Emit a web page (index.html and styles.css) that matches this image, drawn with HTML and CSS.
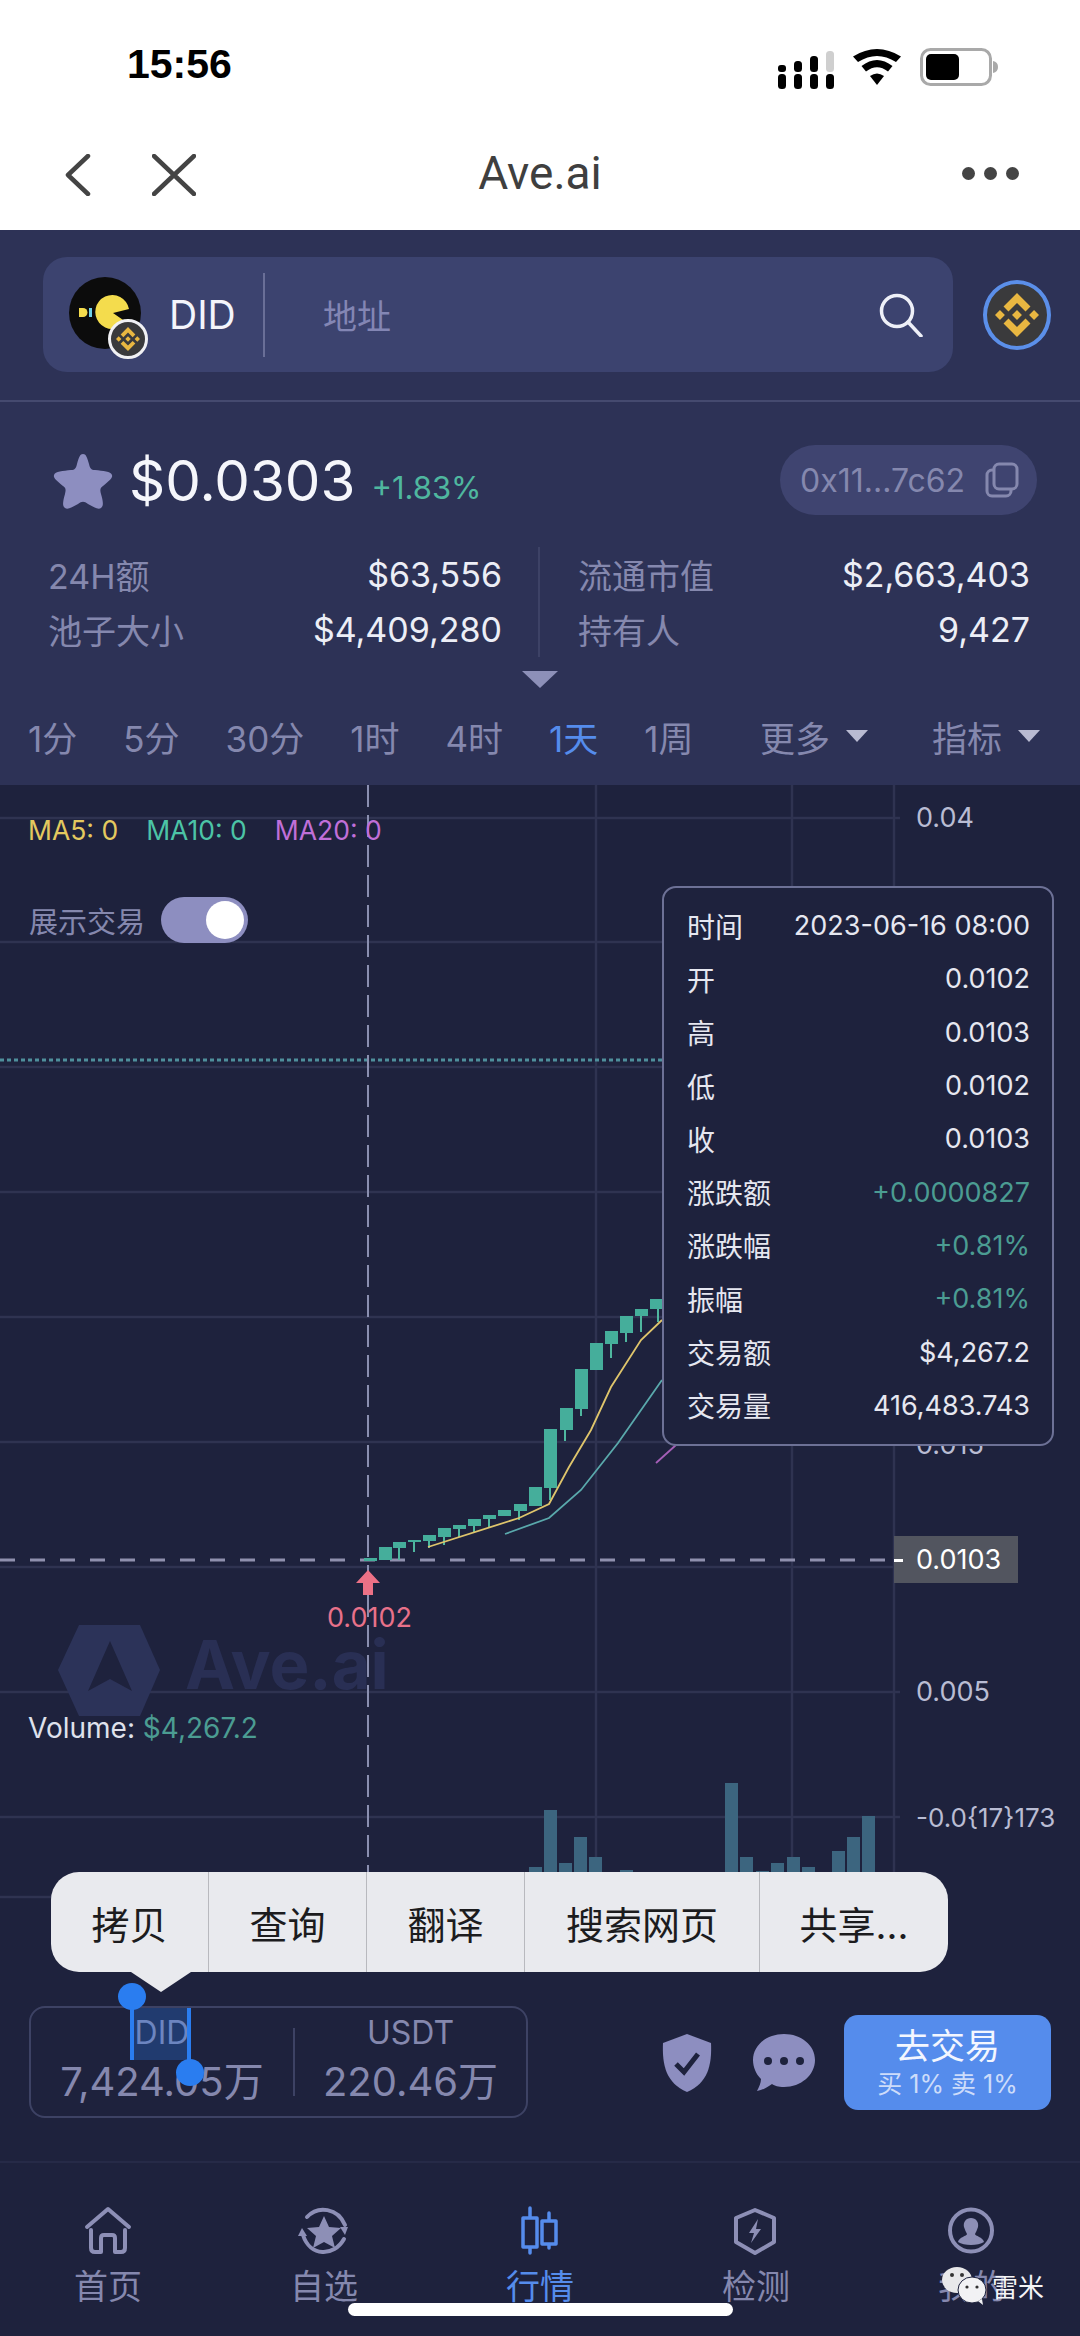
FILE: index.html
```html
<!DOCTYPE html><html lang="zh-CN">
<head>
  <meta charset="UTF-8" />
  <meta name="viewport" content="width=device-width, initial-scale=1.0" />
  <title>Ave.ai</title>
  <link rel="stylesheet" href="styles.css">
</head>
<body>
  <svg class="defs" width="0" height="0">
    <symbol id="bnb" viewBox="0 0 32 32"><path d="M9.8 13.5 16 7.3l6.2 6.2 3.6-3.6L16 0 6.2 9.9zM0 16l3.6-3.6L7.2 16l-3.6 3.6zM9.8 18.5 16 24.7l6.2-6.2 3.6 3.6L16 32l-9.8-9.8zM24.8 16l3.6-3.6L32 16l-3.6 3.6zM19.6 16 16 12.4 13.3 15l-.3.3-.6.7L16 19.6 19.6 16z"/></symbol>
  </svg>

  <div class="page">
    <div class="status">
      <span class="clock">15:56</span>
      <div class="status-icons">
        <svg class="signal" width="56" height="38" viewBox="0 0 56 38">
          <rect x="0" y="23" width="8" height="15" rx="3.5"/><rect x="0" y="14" width="8" height="7" rx="3"/>
          <rect x="16" y="23" width="8" height="15" rx="3.5"/><rect x="16" y="10" width="8" height="11" rx="3.5"/>
          <rect x="32" y="23" width="8" height="15" rx="3.5"/><rect x="32" y="5" width="8" height="16" rx="3.5"/>
          <rect x="48" y="23" width="8" height="15" rx="3.5"/><rect x="48" y="0" width="8" height="21" rx="3.5" fill="#cfcfcf"/>
        </svg>
        <svg width="48" height="36" viewBox="0 0 48 36">
          <path d="M24 36 17 27q7-5 14 0z"/>
          <path d="M13 22.500 8.500 17q15.500-12 31 0L35 22.500q-11-8.500-22 0z"/>
          <path d="M5 13 0 7.500q24-15 48 0L43 13Q24 1 5 13z"/>
        </svg>
        <svg width="78" height="38" viewBox="0 0 78 38">
          <rect x="1.500" y="1.500" width="69" height="35" rx="9" fill="#fff" stroke="#a9a9a9" stroke-width="3"/>
          <rect x="6" y="6" width="33" height="26" rx="5"/>
          <path d="M73 13q5 1 5 6t-5 6z" fill="#a9a9a9"/>
        </svg>
      </div>
    </div>

    <div class="navbar">
      <svg class="nav-back" width="26" height="42" viewBox="0 0 26 42"><path d="M23 2 3 21l20 19"/></svg>
      <svg class="nav-close" width="44" height="42" viewBox="0 0 44 42"><path d="M2 2l40 38M42 2 2 40"/></svg>
      <span class="nav-title">Ave.ai</span>
      <div class="nav-dots"><i></i><i></i><i></i></div>
    </div>

    <div class="search-section">
      <div class="search-box">
        <div class="token">
          <svg class="token-logo" width="72" height="72" viewBox="0 0 72 72">
            <circle cx="36" cy="36" r="36" fill="#0c0c0c"/>
            <path d="M60 33a17 17 0 1 0 -3 13L44 37z" fill="#f4dc4d" transform="translate(0 -1)"/>
            <path d="M10 31h4a4 4 0 0 1 0 9h-4z" fill="#f4dc4d"/>
            <rect x="20" y="31" width="3" height="9" fill="#6fd0e8"/>
            <path d="M27 31h4a4 4 0 0 1 0 9h-4z" fill="#f4dc4d"/>
          </svg>
          <span class="chain-badge"><svg width="24" height="24"><use href="#bnb"/></svg></span>
        </div>
        <span class="token-name">DID</span>
        <span class="search-sep"></span>
        <span class="search-hint">地址</span>
        <svg class="search-icon" width="44" height="44" viewBox="0 0 44 44"><circle cx="18" cy="18" r="15.500"/><path d="M29 29l13 14"/></svg>
      </div>
      <div class="chain-btn"><svg width="44" height="44"><use href="#bnb"/></svg></div>
    </div>

    <div class="info">
      <div class="price-row">
        <svg class="fav" width="62" height="60" viewBox="0 0 62 60"><path d="M31 3c3 0 4 3 6 10 1 4 2 6 6 6 8 1 16 1 17 5 1 3-3 6-9 11-3 2-3 4-2 8 2 7 3 12 0 14-3 2-7-1-13-4-4-3-6-3-10 0-6 3-10 6-13 4-3-2-2-7 0-14 1-4 1-6-2-8-6-5-10-8-9-11 1-4 9-4 17-5 4 0 5-2 6-6 2-7 3-10 6-10z"/></svg>
        <span class="price">$0.0303</span>
        <span class="change">+1.83%</span>
        <div class="addr">
          <span>0x11...7c62</span>
          <svg width="34" height="36" viewBox="0 0 34 36"><rect x="9" y="2" width="23" height="25" rx="5"/><path d="M9 8H7a5 5 0 0 0-5 5v16a5 5 0 0 0 5 5h14a5 5 0 0 0 5-5v-2"/></svg>
        </div>
      </div>
      <div class="stats">
        <div class="stats-col left">
          <div class="stat"><span>24H额</span><b>$63,556</b></div>
          <div class="stat"><span>池子大小</span><b>$4,409,280</b></div>
        </div>
        <div class="stats-col right">
          <div class="stat"><span>流通市值</span><b>$2,663,403</b></div>
          <div class="stat"><span>持有人</span><b>9,427</b></div>
        </div>
      </div>
      <div class="collapse"></div>
      <div class="tabs">
        <span>1分</span><span>5分</span><span>30分</span><span>1时</span><span>4时</span><span class="on">1天</span><span>1周</span>
        <span class="more first">更多<i></i></span>
        <span class="more">指标<i></i></span>
      </div>
    </div>

    <div class="chart">
      <svg class="chart-svg" width="1080" height="1215" viewBox="0 785 1080 1215">
        <g class="grid">
          <path d="M0 818H900M0 942H900M0 1067H900M0 1192H900M0 1317H900M0 1442H900M0 1567H900M0 1692H900M0 1817H900M0 1897H900"/>
          <path d="M596 785V1900M792 785V1900M894 785V1900"/>
        </g>
        <g class="volume">
          <rect x="529" y="1867" width="13" height="40"/><rect x="544" y="1810" width="13" height="90"/><rect x="559" y="1863" width="13" height="40"/>
          <rect x="574" y="1837" width="13" height="60"/><rect x="589" y="1857" width="13" height="40"/><rect x="620" y="1870" width="13" height="30"/>
          <rect x="725" y="1783" width="13" height="120"/><rect x="740" y="1857" width="13" height="40"/><rect x="756" y="1871" width="13" height="30"/>
          <rect x="771" y="1863" width="13" height="40"/><rect x="787" y="1857" width="13" height="40"/><rect x="802" y="1867" width="13" height="30"/>
          <rect x="832" y="1851" width="13" height="50"/><rect x="847" y="1837" width="13" height="60"/><rect x="862" y="1816" width="13" height="90"/>
        </g>
        <path class="dots" d="M0 1060H663"/>
        <path class="cross-v" d="M368 785V1872"/>
        <path class="cross-h" d="M0 1560H894"/>
        <g class="wicks">
          <path d="M399 1542V1560M414 1540V1552M429 1535V1548M444 1528V1545M459 1525V1537M474 1519V1532M489 1515V1528M519 1504V1520M550 1429V1500M565 1408V1441M581 1369V1416M611 1331V1358M626 1316V1342M641 1309V1332M658 1300V1322"/>
        </g>
        <g class="candles">
          <rect x="364" y="1558" width="13" height="3" fill="#8f90ae"/>
          <rect x="379" y="1547" width="13" height="13"/><rect x="393" y="1542" width="13" height="6"/><rect x="408" y="1540" width="13" height="2"/>
          <rect x="423" y="1535" width="13" height="6"/><rect x="438" y="1528" width="13" height="9"/><rect x="453" y="1525" width="13" height="4"/>
          <rect x="468" y="1519" width="13" height="7"/><rect x="483" y="1515" width="13" height="4"/><rect x="498" y="1510" width="13" height="6"/>
          <rect x="514" y="1504" width="13" height="7"/><rect x="529" y="1487" width="13" height="19"/><rect x="544" y="1429" width="13" height="59"/>
          <rect x="560" y="1408" width="13" height="22"/><rect x="575" y="1369" width="13" height="40"/><rect x="590" y="1343" width="13" height="27"/>
          <rect x="605" y="1331" width="13" height="13"/><rect x="620" y="1316" width="13" height="17"/><rect x="635" y="1309" width="13" height="7"/>
          <rect x="650" y="1299" width="13" height="10"/>
        </g>
        <path class="line-yellow" d="M428 1547 519 1518 549 1504 569 1467 591 1430 611 1387 641 1340 662 1320"/>
        <path class="line-teal" d="M505 1534 549 1518 581 1490 618 1443 662 1380"/>
        <path class="line-purple" d="M656 1463 676 1445"/>
        <path class="arrow-up" d="M368 1570l12 13h-7v12h-10v-12h-7z"/>
        <g class="logo-mark">
          <path d="M79 1625h61l20 45-20 46h-61l-21-46z"/>
          <path class="logo-cut" d="M110 1641l22 50-22-12-22 12z"/>
        </g>
      </svg>

      <span class="watermark">Ave.ai</span>
      <div class="ma"><span class="y">MA5: 0</span><span class="g">MA10: 0</span><span class="p">MA20: 0</span></div>
      <div class="show-trades"><span>展示交易</span><i class="toggle"></i></div>
      <span class="axis a1">0.04</span>
      <span class="axis a2">0.015</span>
      <span class="axis a3">0.005</span>
      <span class="axis a4">-0.0{17}173</span>
      <span class="axis-now">0.0103</span>
      <span class="low">0.0102</span>
      <div class="volume-label">Volume: <em>$4,267.2</em></div>

      <div class="tooltip">
        <div><span>时间</span><b>2023-06-16 08:00</b></div>
        <div><span>开</span><b>0.0102</b></div>
        <div><span>高</span><b>0.0103</b></div>
        <div><span>低</span><b>0.0102</b></div>
        <div><span>收</span><b>0.0103</b></div>
        <div><span>涨跌额</span><b class="up">+0.0000827</b></div>
        <div><span>涨跌幅</span><b class="up">+0.81%</b></div>
        <div><span>振幅</span><b class="up">+0.81%</b></div>
        <div><span>交易额</span><b>$4,267.2</b></div>
        <div><span>交易量</span><b>416,483.743</b></div>
      </div>
    </div>

    <div class="trade-bar">
      <div class="pool">
        <div class="pool-col"><span>DID</span><b>7,424.05万</b></div>
        <div class="pool-col"><span>USDT</span><b>220.46万</b></div>
      </div>
      <svg class="shield" width="50" height="58" viewBox="0 0 50 58">
        <path d="M25 0 49 9c1 22-3 40-24 49C4 49 0 31 1 9z"/>
        <path class="tick" d="M14 30l8 8 14-18"/>
      </svg>
      <svg class="chat" width="62" height="58" viewBox="0 0 62 58">
        <path d="M31 0c17 0 31 11 31 26S48 53 31 53c-6 0-9-1-12-3-4 3-9 6-15 7 2-4 4-8 4-12C3 40 0 33 0 26 0 11 14 0 31 0z"/>
        <circle cx="15" cy="27" r="4"/><circle cx="31" cy="27" r="4"/><circle cx="47" cy="27" r="4"/>
      </svg>
      <div class="go-trade"><strong>去交易</strong><small>买 1% 卖 1%</small></div>
    </div>

    <div class="tabbar">
      <div class="tab">
        <svg width="60" height="56" viewBox="0 0 60 56"><path d="M9 24 30 6l21 18M13 27v18q0 4 4 4h6V35q0-3 3-3h8q3 0 3 3v14h6q4 0 4-4V27"/></svg>
        <span>首页</span>
      </div>
      <div class="tab">
        <svg width="60" height="56" viewBox="0 0 60 56"><path d="M13 14C24 2 44 5 51 22M50 36C40 54 16 54 9 32"/><path class="solid" d="M46 24l8 0-3 8zM4 33l9 0-5-8z"/><path class="solid" d="M30 13l5 11 12 1-9 8 3 12-11-6-11 6 3-12-9-8 12-1z"/></svg>
        <span>自选</span>
      </div>
      <div class="tab on">
        <svg width="60" height="56" viewBox="0 0 60 56"><path d="M13 15h14v29H13zM20 5v10M20 44v6M32 18h14v23H32zM39 10v8M39 41v4"/></svg>
        <span>行情</span>
      </div>
      <div class="tab">
        <svg width="60" height="56" viewBox="0 0 60 56"><path d="M29 7 48 15V39L29 50 10 39V15z"/><path class="solid" d="M32 16 23 30h5l-3 10 10-14h-5z"/></svg>
        <span>检测</span>
      </div>
      <div class="tab">
        <svg width="60" height="56" viewBox="0 0 60 56"><circle cx="29" cy="27.500" r="21"/><path class="solid" d="M29 15c5 0 8 4 7 9-1 3-2 5-3 7 0 2 8 3 9 8-3 2-8 3-13 3s-10-1-13-3c1-5 9-6 9-8-1-2-2-4-3-7-1-5 2-9 7-9z"/></svg>
        <span>我的</span>
      </div>
    </div>

    <!-- text selection menu on top of the page -->
    <div class="menu">
      <span>拷贝</span><span>查询</span><span>翻译</span><span class="wide">搜索网页</span><span class="last">共享...</span>
    </div>
    <i class="menu-tail"></i>
    <i class="sel"></i>
    <i class="knob k1"></i>
    <i class="knob k2"></i>

    <div class="wechat">
      <svg width="58" height="40" viewBox="0 0 58 40">
        <ellipse cx="15" cy="14" rx="15" ry="13" fill="#e8e8ea"/>
        <ellipse cx="30" cy="24" rx="14" ry="13" fill="#f2f2f4" stroke="#1e223d"/>
        <circle cx="10" cy="9" r="2" fill="#333"/><circle cx="20" cy="9" r="2" fill="#333"/>
        <circle cx="25" cy="21" r="1.600" fill="#333"/><circle cx="35" cy="21" r="1.600" fill="#333"/>
        <path d="M36 35l5 4-1-6z" fill="#f2f2f4"/>
      </svg>
      <span>雷米</span>
    </div>
    <i class="home-bar"></i>
  </div>
</body>
</html>
```

FILE: styles.css
```css
:root {
  --head: #2d3256;
  --box: #3c436f;
  --dark: #1e223d;
  --grid: #2f3351;
  --muted: #8588ae;
  --light: #e6e7f0;
  --lilac: #8d8ec0;
  --blue: #558cec;
  --green: #4fb79f;
}

* {
  box-sizing: border-box;
}

body {
  margin: 0;
  background: var(--dark);
  font-family: Inter, "Noto Sans CJK SC", sans-serif;
}

.defs {
  position: absolute;
}

.page {
  position: relative;
  width: 1080px;
  height: 2336px;
  overflow: hidden;
}

/* status + nav */
.status {
  height: 100px;
  background: #fff;
  display: flex;
  align-items: flex-start;
  justify-content: space-between;
  padding: 44px 82px 0 127px;
}

.clock {
  font: 700 41px/40px "Liberation Sans", sans-serif;
  color: #000;
}

.status-icons {
  display: flex;
  align-items: center;
  gap: 19px;
}

.signal {
  margin-top: 7px;
}

.navbar {
  position: relative;
  height: 130px;
  background: #fff;
  display: flex;
  align-items: center;
  justify-content: center;
  padding-top: 16px;
}

.navbar svg {
  position: absolute;
  top: 54px;
  fill: none;
  stroke: #444;
  stroke-width: 4.500;
  stroke-linecap: round;
  stroke-linejoin: round;
}

.nav-back {
  left: 65px;
}

.nav-close {
  left: 152px;
}

.nav-title {
  font: 400 46px "Roboto", sans-serif;
  color: #3f3f3f;
}

.nav-dots {
  position: absolute;
  right: 61px;
  top: 67px;
  display: flex;
  gap: 9px;
}

.nav-dots i {
  width: 13px;
  height: 13px;
  border-radius: 50%;
  background: #444;
}

/* search */
.search-section {
  height: 172px;
  background: var(--head);
  border-bottom: 2px solid #454a6f;
  display: flex;
  align-items: flex-start;
  padding: 27px 29px 0 43px;
  gap: 30px;
}

.search-box {
  width: 910px;
  height: 115px;
  background: var(--box);
  border-radius: 24px;
  display: flex;
  align-items: center;
  padding-left: 26px;
  color: #fff;
}

.token {
  position: relative;
  width: 72px;
  height: 72px;
  margin-top: -3px;
}

.chain-badge {
  position: absolute;
  left: 39px;
  top: 42px;
  width: 40px;
  height: 40px;
  border-radius: 50%;
  background: #3a3a3c;
  border: 3px solid #f1f1f4;
  display: flex;
  align-items: center;
  justify-content: center;
  fill: #e9b741;
}

.token-name {
  margin-left: 28px;
  font: 400 39px Inter, sans-serif;
  color: #f4f5fb;
  width: 66px;
}

.search-sep {
  width: 2px;
  height: 84px;
  background: #6a6f97;
  margin-left: 28px;
}

.search-hint {
  margin-left: 58px;
  font-size: 34px;
  color: #8386b4;
}

.search-icon {
  margin-left: auto;
  margin-right: 30px;
  fill: none;
  stroke: #eef0f8;
  stroke-width: 3.500;
  stroke-linecap: round;
}

.chain-btn {
  width: 68px;
  height: 70px;
  margin-top: 23px;
  border-radius: 50%;
  background: #3a3a3c;
  border: 4px solid #5b8fe9;
  display: flex;
  align-items: center;
  justify-content: center;
  fill: #e9b741;
}

/* price block */
.info {
  height: 383px;
  background: var(--head);
  padding-top: 43px;
}

.price-row {
  display: flex;
  align-items: center;
  height: 70px;
  padding: 0 43px 0 52px;
}

.fav {
  fill: var(--lilac);
  margin-top: 2px;
}

.price {
  margin-left: 15px;
  font-size: 56.500px;
  font-weight: 400;
  color: #f5f6fb;
}

.change {
  margin-left: 16px;
  margin-top: 14px;
  font-size: 31px;
  color: var(--green);
}

.addr {
  margin-left: auto;
  width: 257px;
  height: 70px;
  border-radius: 35px;
  background: #3f4470;
  display: flex;
  align-items: center;
  justify-content: space-between;
  padding: 0 18px 0 20px;
  font-size: 32px;
  color: #8588ae;
}

.addr svg {
  fill: none;
  stroke: #8588ae;
  stroke-width: 3;
}

.stats {
  display: flex;
  margin-top: 32px;
  height: 110px;
}

.stats-col {
  width: 540px;
}

.stats-col.left {
  padding: 0 36px 0 48px;
  border-right: 2px solid #3d4266;
}

.stats-col.right {
  padding: 0 50px 0 38px;
}

.stat {
  height: 55px;
  display: flex;
  align-items: center;
  justify-content: space-between;
  font-size: 34px;
  color: var(--muted);
}

.stat b {
  font-weight: 400;
  color: #eceef6;
  font-size: 34px;
}

.collapse {
  width: 0;
  margin: 14px auto 0;
  border-style: solid;
  border-width: 17px 18px 0;
  border-color: #8d90b8 transparent transparent;
}

.tabs {
  display: flex;
  align-items: center;
  gap: 46px;
  height: 97px;
  margin-top: 2px;
  padding: 0 40px 5px 28px;
  font-size: 35px;
  color: var(--muted);
}

.tabs .on {
  color: var(--blue);
}

.more {
  display: flex;
  align-items: center;
  gap: 16px;
}

.more.first {
  margin-left: auto;
  margin-right: 18px;
}

.more i {
  border-style: solid;
  border-width: 12px 11px 0;
  border-color: #b9bbd2 transparent transparent;
}

/* chart */
.chart {
  position: relative;
  height: 1215px;
  background: var(--dark);
  font-size: 27px;
}

.chart-svg {
  display: block;
}

.grid path {
  fill: none;
  stroke: var(--grid);
  stroke-width: 2.500;
}

.volume rect {
  fill: #3c657f;
}

.dots {
  stroke: #4f8f9c;
  stroke-width: 3;
  stroke-dasharray: 4 3;
}

.cross-v {
  stroke: #8a8fb0;
  stroke-width: 2;
  stroke-dasharray: 22 8;
}

.cross-h {
  stroke: #8f90ae;
  stroke-width: 3;
  stroke-dasharray: 15 15;
}

.wicks path {
  stroke: #4fb79f;
  stroke-width: 2;
}

.candles rect {
  fill: #45ae9b;
}

.line-yellow,
.line-teal,
.line-purple {
  fill: none;
  stroke-width: 1.800;
}

.line-yellow {
  stroke: #dfc56c;
}

.line-teal {
  stroke: #5aa9ac;
}

.line-purple {
  stroke: #a55fb8;
}

.arrow-up {
  fill: #ec7186;
}

.logo-mark {
  fill: #2c3359;
}

.logo-cut {
  fill: var(--dark);
}

.watermark {
  position: absolute;
  left: 185px;
  top: 850px;
  font-size: 67px;
  font-weight: 700;
  line-height: 60px;
  color: #292f54;
}

.ma {
  position: absolute;
  left: 28px;
  top: 30px;
  display: flex;
  gap: 28px;
  font-size: 26.500px;
  line-height: 30px;
}

.ma .y {
  color: #e4c95f;
}

.ma .g {
  color: #4cc4a6;
}

.ma .p {
  color: #c06fd8;
}

.show-trades {
  position: absolute;
  left: 29px;
  top: 112px;
  display: flex;
  align-items: center;
  gap: 16px;
  font-size: 29px;
  color: var(--muted);
}

.toggle {
  position: relative;
  width: 87px;
  height: 46px;
  border-radius: 23px;
  background: var(--lilac);
}

.toggle::after {
  content: "";
  position: absolute;
  right: 4px;
  top: 4px;
  width: 38px;
  height: 38px;
  border-radius: 50%;
  background: #fff;
}

.axis {
  position: absolute;
  left: 916px;
  line-height: 32px;
  color: #b9bcd3;
  white-space: nowrap;
}

.a1 { top: 17px; }
.a2 { top: 644px; }
.a3 { top: 891px; }
.a4 { top: 1017px; font-size: 26px; }

.axis-now {
  position: absolute;
  left: 894px;
  top: 751px;
  width: 124px;
  height: 47px;
  background: #52555f;
  color: #fff;
  line-height: 47px;
  padding-left: 22px;
}

.axis-now::before {
  content: "";
  position: absolute;
  left: 0;
  top: 23px;
  width: 9px;
  height: 3px;
  background: #fff;
}

.low {
  position: absolute;
  left: 327px;
  top: 818px;
  line-height: 30px;
  color: #e8718a;
}

.volume-label {
  position: absolute;
  left: 28px;
  top: 927px;
  line-height: 32px;
  font-size: 28px;
  color: #dfe1ec;
}

.volume-label em {
  font-style: normal;
  color: #4b9c92;
}

.tooltip {
  position: absolute;
  left: 662px;
  top: 101px;
  width: 392px;
  height: 560px;
  padding: 11px 22px 0 23px;
  background: var(--dark);
  border: 2.500px solid #6d7196;
  border-radius: 14px;
  color: var(--light);
  font-size: 28px;
}

.tooltip div {
  height: 53.300px;
  display: flex;
  align-items: center;
  justify-content: space-between;
}

.tooltip b {
  font-weight: 400;
  font-size: 27px;
}

.tooltip .up {
  color: #4b9c92;
}

/* bottom trade bar */
.trade-bar {
  height: 163px;
  background: var(--dark);
  border-bottom: 2px solid #262a47;
  display: flex;
  align-items: flex-start;
  padding: 6px 29px 0 29px;
}

.pool {
  width: 499px;
  height: 112px;
  border: 2.500px solid #3d4264;
  border-radius: 16px;
  display: flex;
  align-items: center;
}

.pool-col {
  flex: 1;
  height: 68px;
  display: flex;
  flex-direction: column;
  align-items: center;
  justify-content: space-between;
  color: var(--muted);
  font-size: 32px;
  line-height: 30px;
}

.pool-col:first-child {
  border-right: 2px solid #3d4264;
  flex: 0 0 264px;
}

.pool-col span {
  margin-top: -10px;
}

.pool-col b {
  font-weight: 400;
  font-size: 40px;
  line-height: 44px;
  margin-bottom: -8px;
}

.shield {
  margin: 28px 0 0 134px;
  fill: var(--lilac);
}

.tick {
  fill: none;
  stroke: #1e223d;
  stroke-width: 5;
}

.chat {
  margin: 28px 0 0 41px;
  fill: var(--lilac);
}

.chat circle {
  fill: #1e223d;
}

.go-trade {
  margin: 9px 0 0 auto;
  width: 207px;
  height: 95px;
  border-radius: 14px;
  background: var(--blue);
  display: flex;
  flex-direction: column;
  align-items: center;
  justify-content: center;
  color: #f3f6ff;
}

.go-trade strong {
  font-size: 35px;
  font-weight: 400;
  line-height: 42px;
}

.go-trade small {
  font-size: 25px;
  line-height: 34px;
  color: #cddcfa;
}

/* tab bar */
.tabbar {
  height: 173px;
  display: grid;
  grid-template-columns: repeat(5, 216px);
  padding-top: 40px;
  background: var(--dark);
}

.tab {
  display: flex;
  flex-direction: column;
  align-items: center;
  color: var(--muted);
  font-size: 34px;
  line-height: 42px;
  gap: 7px;
}

.tab svg {
  fill: none;
  stroke: #8d8fb6;
  stroke-width: 4;
  stroke-linejoin: round;
  stroke-linecap: round;
}

.tab .solid {
  fill: #8d8fb6;
  stroke: none;
}

.tab.on {
  color: var(--blue);
}

.tab.on svg {
  stroke: var(--blue);
  stroke-width: 3.500;
}

/* overlays */
.menu {
  position: absolute;
  left: 51px;
  top: 1872px;
  width: 897px;
  height: 100px;
  border-radius: 28px;
  background: #e9eaee;
  display: flex;
  color: #1c1c1e;
  font-size: 38px;
}

.menu span {
  width: 158px;
  display: flex;
  align-items: center;
  justify-content: center;
  border-right: 1.500px solid #b8b9be;
}

.menu .wide {
  width: 235px;
}

.menu .last {
  flex: 1;
  border-right: 0;
}

.menu-tail {
  position: absolute;
  left: 131px;
  top: 1972px;
  border-style: solid;
  border-width: 20px 30px 0;
  border-color: #e9eaee transparent transparent;
}

.sel {
  position: absolute;
  left: 130px;
  top: 2008px;
  width: 61px;
  height: 52px;
  background: rgba(42, 125, 240, 0.28);
  border-left: 4px solid #2a7df0;
  border-right: 4px solid #2a7df0;
}

.knob {
  position: absolute;
  width: 28px;
  height: 27px;
  border-radius: 50%;
  background: #2a7df0;
}

.k1 {
  left: 118px;
  top: 1983px;
}

.k2 {
  left: 176px;
  top: 2059px;
}

.wechat {
  position: absolute;
  left: 942px;
  top: 2266px;
  display: flex;
  color: #f4f4f6;
  font-size: 26px;
  line-height: 44px;
}

.wechat span {
  margin-left: -8px;
}

.home-bar {
  position: absolute;
  left: 348px;
  top: 2303px;
  width: 385px;
  height: 13px;
  border-radius: 7px;
  background: #fff;
}
```
